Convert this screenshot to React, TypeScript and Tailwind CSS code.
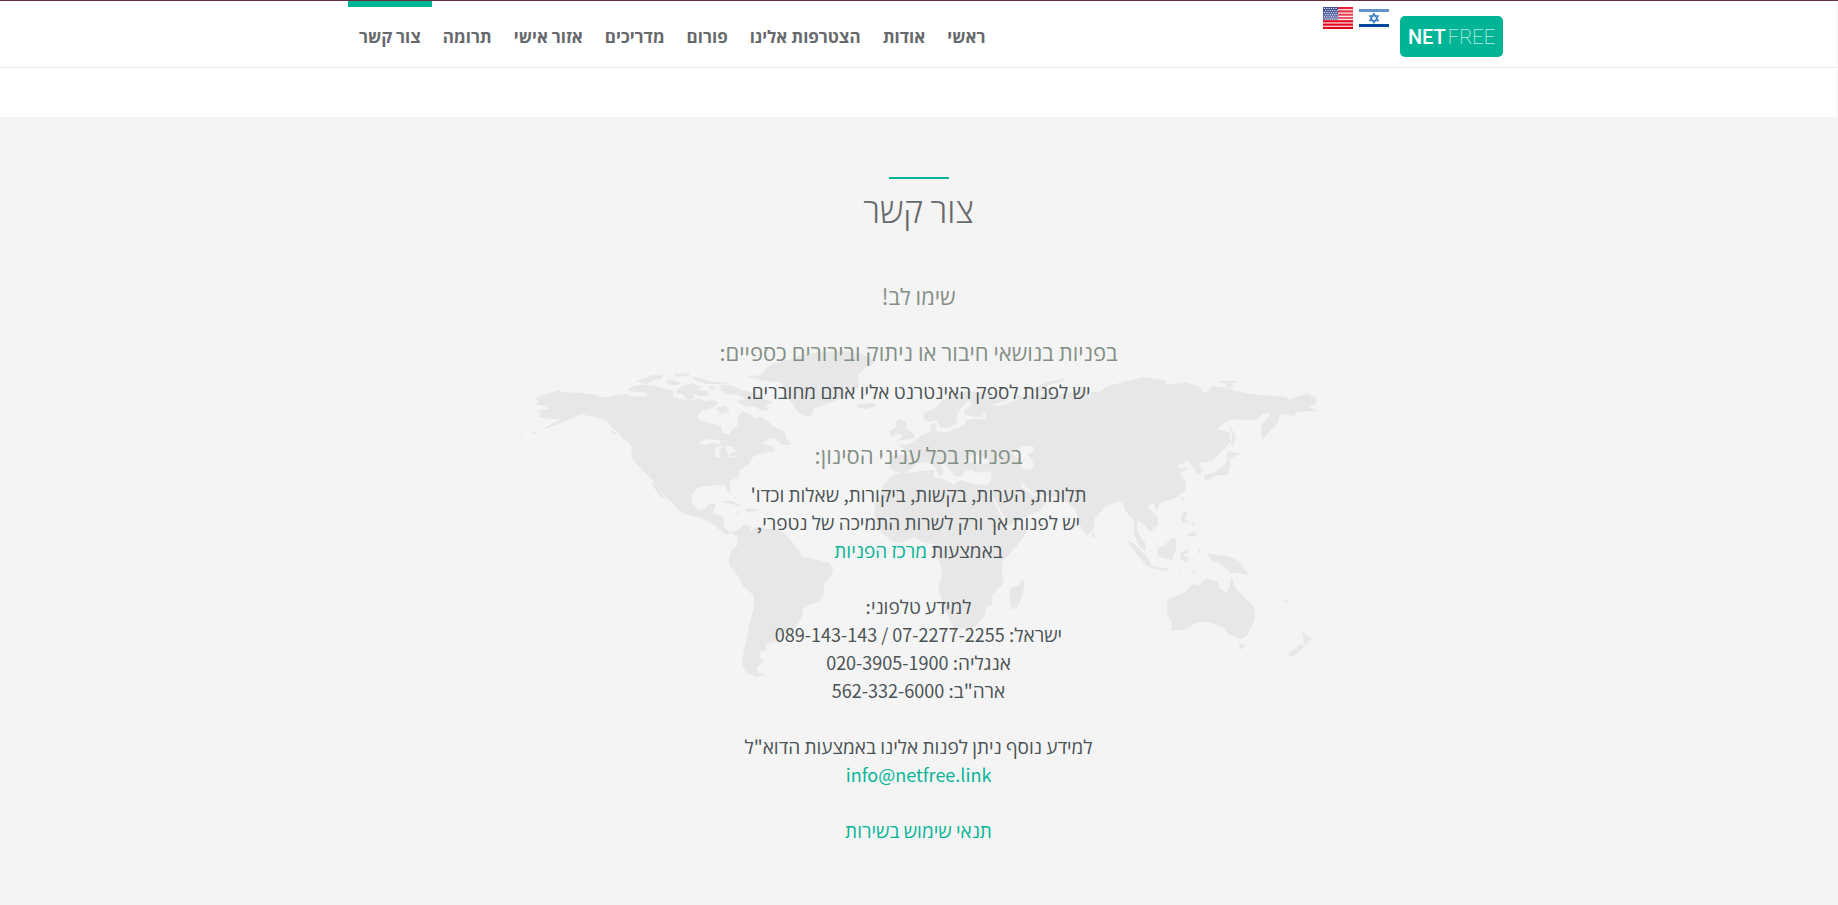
const navItems = [
  { label: 'ראשי', href: '#home' },
  { label: 'אודות', href: '#about' },
  { label: 'הצטרפות אלינו', href: '#join' },
  { label: 'פורום', href: '#forum' },
  { label: 'מדריכים', href: '#guides' },
  { label: 'אזור אישי', href: '#account' },
  { label: 'תרומה', href: '#donate' },
  { label: 'צור קשר', href: '#contact', active: true },
];

const phones = [
  { region: 'ישראל', numbers: '089-143-143 / 07-2277-2255' },
  { region: 'אנגליה', numbers: '020-3905-1900' },
  { region: 'ארה"ב', numbers: '562-332-6000' },
];

const linkClass = 'text-[#08b598] hover:underline';

function UsFlag() {
  const stripes = [0, 1, 2, 3, 4, 5, 6];
  const stars = [0, 1, 2, 3, 4, 5];
  return (
    <svg width="30" height="22" viewBox="0 0 30 22" aria-hidden="true">
      <defs>
        <linearGradient id="us-shine" x1="0" y1="0" x2="0" y2="1">
          <stop offset="0" stopColor="#fff" stopOpacity=".12" />
          <stop offset="1" stopColor="#fff" stopOpacity=".36" />
        </linearGradient>
      </defs>
      <rect width="30" height="22" fill="#fff" />
      {stripes.map((i) => (
        <rect key={i} y={i * 3.3} width="30" height="2.2" fill="#e2001a" />
      ))}
      <rect width="15" height="13" fill="#1c2f80" />
      {stars.map((row) =>
        stars.map((col) => (
          <circle
            key={`${row}-${col}`}
            cx={1.6 + col * 2.3 + (row % 2) * 1.1}
            cy={1.4 + row * 2.1}
            r=".6"
            fill="#fff"
          />
        )),
      )}
      <rect width="30" height="13" fill="url(#us-shine)" />
    </svg>
  );
}

function IsraelFlag() {
  return (
    <svg width="30" height="22" viewBox="0 0 30 22" aria-hidden="true">
      <rect width="30" height="22" fill="#fff" />
      <rect y="2" width="30" height="3" fill="#5e93cb" />
      <rect y="17" width="30" height="3" fill="#00479b" />
      <rect y="21" width="30" height="1" fill="#ececf0" />
      <g fill="none" stroke="#3f80c2" strokeWidth="1.3">
        <path d="M15 6.6 19.2 13.6H10.8Z" />
        <path d="M15 15.8 10.8 8.9H19.2Z" />
      </g>
    </svg>
  );
}

function WorldMap() {
  return (
    <svg className="w-[840px] max-w-full" viewBox="0 0 2520 1026" aria-hidden="true" fill="#e7e7e7">
      {/* Americas */}
      <path d="M103 192 120 186 110 177 125 167 150 160 177 151 190 157 245 158 260 162 290 164 300 170 330 172 350 164 385 162 395 170 448 169 440 158 385 152 400 138 440 134 470 138 500 148 522 150 524 172 570 182 600 176 622 184 640 178 660 190 640 204 608 212 598 226 600 240 640 250 668 258 670 278 692 284 700 266 716 256 718 226 732 214 748 220 770 236 788 230 800 238 822 258 862 280 850 292 810 296 790 310 812 316 832 332 790 340 760 352 750 372 722 392 718 410 690 426 696 456 690 460 676 434 650 436 620 438 594 444 578 468 582 498 604 510 620 505 630 492 652 490 642 520 672 530 675 560 692 576 712 572 720 582 712 592 700 580 680 584 640 552 600 532 575 528 540 512 520 488 500 470 470 430 445 405 430 390 410 370 398 355 398 320 385 300 340 265 320 240 285 230 245 223 210 238 180 252 128 270 160 250 185 238 150 236 120 230 125 220 112 212 150 206 134 198Z" />
      <path d="M455 424 470 430 490 462 502 478 486 470 468 448ZM362 284 410 308 400 312 372 298ZM330 268 352 278 348 284ZM52 283 76 284 72 288ZM95 280 116 270 110 280Z" />
      <path d="M412 124 460 106 490 104 486 116 462 122 440 132ZM524 102 568 100 572 108 530 110ZM580 108 630 124 694 130 694 133 620 132 584 118ZM500 124 520 120 548 130 530 136 508 134ZM548 138 580 130 612 142 590 150 626 152 628 166 600 168 584 162 588 176 566 180 550 164 528 156ZM630 138 650 142 636 152ZM664 134 704 138 728 150 770 160 800 178 824 186 800 196 812 210 786 212 770 200 740 200 712 184 740 176 716 164 684 162 664 150ZM650 204 680 196 692 214 668 222ZM830 300 856 280 862 296 880 314 850 314Z" />
      <path d="M745 110 790 104 800 84 830 68 880 58 910 44 960 36 1040 34 1090 42 1130 66 1100 84 1078 106 1078 130 1082 142 1050 160 1020 178 975 194 944 206 940 224 920 230 898 218 880 190 862 172 858 146 846 126 800 124ZM1072 192 1096 192 1120 188 1132 196 1104 208 1080 204ZM670 484 700 482 730 498 704 494ZM740 506 772 506 776 514 742 516ZM710 518 722 520 716 524ZM704 468 714 472 708 474Z" />
      <path d="M716 592 712 575 738 552 756 560 752 572 778 560 800 566 836 568 858 582 880 606 900 632 908 650 940 655 990 668 1003 684 997 706 975 732 974 764 960 786 932 794 910 810 910 828 892 858 862 884 848 860 850 884 828 896 834 906 800 912 804 930 780 938 784 956 796 960 772 984 778 998 804 1004 770 1011 740 996 728 968 736 928 742 900 752 850 764 806 765 768 732 738 714 704 690 672 690 652 700 628 716 614Z" />
      <path fill="#f4f4f4" d="M595 310 622 298 660 300 668 314 640 308 620 314ZM650 322 676 318 660 330 662 352 648 352ZM684 316 704 322 712 336 698 336 690 348 680 330ZM690 350 722 344 716 350 694 354Z" />
      {/* Europe, Africa, Asia and Oceania */}
      <g transform="translate(1080 0)">
        <path d="M92 386 94 350 128 344 150 346 150 338 134 326 118 314 150 312 172 298 190 285 215 274 214 256 226 248 234 262 228 272 258 278 300 264 318 252 318 240 340 236 380 238 380 230 340 230 314 222 318 208 340 194 330 180 304 206 292 232 296 250 272 262 246 264 232 240 208 246 194 238 194 220 228 204 250 180 290 162 330 154 372 158 420 168 446 182 398 192 420 200 456 186 476 180 468 160 490 170 540 165 560 155 600 165 644 154 664 152 656 136 676 140 692 172 700 154 720 158 740 140 800 124 856 111 920 122 920 134 980 128 1020 138 1032 158 1048 154 1060 138 1110 144 1124 152 1190 164 1280 170 1290 178 1344 160 1370 172 1374 190 1350 202 1372 212 1310 216 1308 228 1264 222 1256 248 1234 272 1210 299 1205 262 1234 220 1212 220 1192 240 1120 238 1090 252 1075 268 1110 276 1116 304 1080 344 1060 362 1018 370 1034 394 1018 406 1000 382 990 362 956 376 964 386 992 382 964 400 982 430 978 452 950 474 902 490 892 515 885 488 864 500 896 530 898 555 872 576 858 556 836 540 834 566 862 632 846 624 826 588 824 540 798 512 794 492 776 484 740 498 708 534 702 570 684 588 666 562 648 506 624 488 610 474 550 466 520 458 494 430 484 438 520 466 540 468 562 490 542 512 500 530 452 558 430 520 398 464 384 440 396 418 398 394 350 398 340 390 318 394 304 410 288 408 264 378 242 366 254 394 244 412 224 376 202 366 176 370 150 392 130 402Z" />
        <path d="M105 402 150 398 200 392 226 390 224 412 258 418 284 434 304 420 344 432 384 436 392 462 424 524 450 572 500 564 502 578 470 622 430 666 428 696 434 730 400 766 400 792 380 806 378 824 350 860 320 866 286 869 270 834 254 800 238 742 250 706 244 668 224 640 224 612 190 606 168 590 124 608 102 606 70 580 48 544 46 500 62 464 76 432ZM455 744 480 736 490 718 498 730 488 770 474 804 458 808 452 780Z" />
        <path d="M110 244 126 236 144 246 142 264 162 280 168 294 110 304 132 290 114 276ZM90 274 112 262 118 280 94 290ZM520 152 560 126 620 114 614 124 570 134 540 160ZM1080 122 1130 122 1132 128 1118 130 1124 142 1104 142 1100 130 1084 130ZM1112 250 1130 292 1124 318 1116 316 1120 290ZM1110 334 1144 342 1112 356 1100 348ZM1110 354 1114 380 1104 406 1074 406 1040 422 1034 406 1070 396 1096 374ZM966 478 980 470 974 484ZM974 512 986 518 978 536 990 548 970 548 966 532ZM996 544 1006 550 1004 562ZM982 586 1006 572 1012 586 1000 592ZM698 574 708 582 706 594 698 592ZM820 570 858 606 862 630 840 616ZM802 598 828 612 860 646 876 672 866 680 834 644ZM872 676 930 686 926 692 874 684ZM894 626 912 618 944 592 952 602 950 632 938 660 900 650ZM964 638 990 626 986 640 970 644 992 656 980 668 964 656ZM1018 624 1026 632 1020 644ZM1042 640 1070 644 1110 650 1140 664 1170 706 1140 698 1116 700 1084 670 1060 662ZM994 702 1012 690 1008 700ZM1048 692 1052 700 1044 696ZM962 698 970 702 962 704Z" />
        <path d="M924 786 930 778 978 756 1004 730 1016 738 1044 714 1058 722 1080 724 1080 744 1104 758 1112 738 1118 710 1130 744 1158 774 1186 802 1188 838 1166 884 1148 898 1108 882 1094 862 1040 844 1010 850 984 866 936 874 940 852 924 818ZM1136 912 1160 912 1148 930ZM1328 874 1342 886 1360 894 1338 916 1334 898ZM1328 910 1334 922 1302 950 1284 944 1304 930ZM1268 776 1284 782 1282 788ZM1362 754 1374 744 1366 752Z" />
        <path fill="#f4f4f4" d="M312 366 326 348 350 342 372 350 392 364 380 372 340 368ZM460 340 494 316 524 320 524 336 506 342 520 360 524 384 500 390 484 380 490 366ZM318 200 328 196 324 214ZM366 220 382 222 376 230Z" />
      </g>
    </svg>
  );
}

export default function App() {
  return (
    <div
      dir="rtl"
      lang="he"
      className="flex min-h-screen flex-col border-t border-[#66303f] bg-[#f4f4f4] pr-px font-['Noto_Sans_CJK_SC','Open_Sans',sans-serif] text-[#4b5354]"
    >
      <header className="border-b border-[#e7e7e7] bg-white">
        <div className="mx-auto flex h-[66px] max-w-[1169px] items-start pl-[14px]">
          <a
            href="#home"
            dir="ltr"
            className="mt-[15px] flex h-[41px] w-[103px] items-center justify-center gap-[2px] rounded-[5px] bg-[#00b496] font-['Roboto',sans-serif] text-[20px] text-white"
          >
            <span className="font-medium">NET</span>
            <span className="font-thin">FREE</span>
          </a>
          <div className="mr-[11px] mt-[6px] flex gap-[6px]">
            <a href="#he" aria-label="עברית">
              <IsraelFlag />
            </a>
            <a href="#en" aria-label="English">
              <UsFlag />
            </a>
          </div>
          <nav className="mr-auto flex h-full">
            {navItems.map((item) => (
              <a
                key={item.label}
                href={item.href}
                className={`border-t-[6px] px-[11px] pt-[15px] text-[17px] leading-[28px] font-bold text-[#67696c] ${
                  item.active ? 'border-[#00b496]' : 'border-transparent'
                }`}
              >
                {item.label}
              </a>
            ))}
          </nav>
        </div>
      </header>

      <div className="h-[49px] bg-white" />

      <main className="relative flex grow flex-col items-center px-4 pt-[60px] pb-[60px] text-center text-[19px] leading-7">
        <div className="absolute inset-0 flex items-center justify-center">
          <WorldMap />
        </div>
        <div className="relative flex flex-col items-center">
          <div className="h-[2px] w-[60px] bg-[#00b496]" />
          <h1 className="mt-[10px] text-[34px] leading-10 font-light text-[#67696c]">צור קשר</h1>

          <h2 className="mt-[52px] text-[22px] leading-7 text-[#849086]">שימו לב!</h2>

          <h2 className="mt-7 text-[22px] leading-7 text-[#849086]">
            בפניות בנושאי חיבור או ניתוק ובירורים כספיים:
          </h2>
          <p className="mt-3">יש לפנות לספק האינטרנט אליו אתם מחוברים.</p>

          <h2 className="mt-[35px] text-[22px] leading-7 text-[#849086]">בפניות בכל עניני הסינון:</h2>
          <p className="mt-3">
            תלונות, הערות, בקשות, ביקורות, שאלות וכדו'
            <br />
            יש לפנות אך ורק לשרות התמיכה של נטפרי,
            <br />
            באמצעות{' '}
            <a href="#tickets" className={linkClass}>
              מרכז הפניות
            </a>
          </p>

          <div className="mt-7">
            <p>למידע טלפוני:</p>
            {phones.map((phone) => (
              <p key={phone.region}>
                {phone.region}:{' '}
                <span dir="ltr" className="text-lg leading-none">
                  {phone.numbers}
                </span>
              </p>
            ))}
          </div>

          <p className="mt-7">
            למידע נוסף ניתן לפנות אלינו באמצעות הדוא"ל
            <br />
            <a href="mailto:info@netfree.link" className={`text-lg leading-none ${linkClass}`}>
              info@netfree.link
            </a>
          </p>

          <p className="mt-7">
            <a href="#terms" className={linkClass}>
              תנאי שימוש בשירות
            </a>
          </p>
        </div>
      </main>
    </div>
  );
}
